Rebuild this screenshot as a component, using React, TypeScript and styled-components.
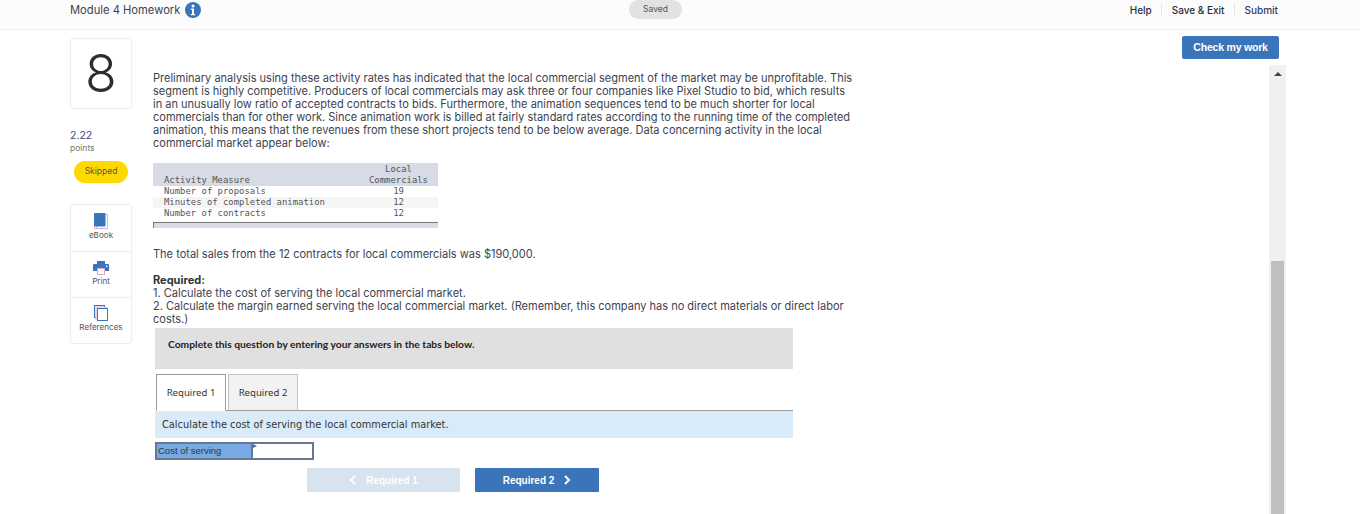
import * as React from 'react';
import styled, {createGlobalStyle} from 'styled-components';

const Global = createGlobalStyle`
	html, body {
		margin: 0;
		padding: 0;
		height: 514px;
		overflow: hidden;
		background: #fff;
		font-family: Inter, "Liberation Sans", sans-serif;
		color: #333;
	}
	* {
		box-sizing: border-box;
	}
`;

const Page = styled.div`
	width: 1360px;
	height: 514px;
	overflow: hidden;
	display: flex;
	flex-direction: column;
`;

const Header = styled.header`
	height: 30px;
	flex: none;
	display: grid;
	grid-template-columns: 559px 53px 1fr;
	align-items: center;
	padding: 0 82px 10px 70px;
	background: #fcfcfc;
	border-bottom: 1px solid #eee;
`;

const Title = styled.div`
	display: flex;
	align-items: center;
	gap: 5px;
	font-size: 11.2px;
	color: #3c4250;
`;

const SavedPill = styled.div`
	width: 53px;
	height: 19px;
	border-radius: 10px;
	background: #e2e2e2;
	color: #555;
	font-size: 8.5px;
	line-height: 19px;
	text-align: center;
`;

const Nav = styled.nav`
	display: flex;
	justify-content: flex-end;
	align-items: center;
	font-size: 10px;
	font-weight: 500;
`;

const NavLink = styled.span<{$divided?: boolean; $accent?: boolean}>`
	padding: 0 ${p => (p.$divided ? '9px' : '0')} 0 10px;
	border-right: ${p => (p.$divided ? '1px solid #e8e8e8' : 'none')};
	color: ${p => (p.$accent ? '#2f3a6b' : '#2b2f3a')};
	line-height: 14px;
`;

const Body = styled.div`
	flex: 1;
	display: flex;
	min-height: 0;
	padding-left: 70px;
`;

const Rail = styled.aside`
	width: 62px;
	flex: none;
	padding-top: 8px;
`;

const NumberCard = styled.div`
	height: 71px;
	border: 1px solid #eee;
	border-radius: 3px;
	display: flex;
	align-items: center;
	justify-content: center;
	font-size: 52px;
	font-weight: 300;
	color: #2d2d2d;
	line-height: 1;
`;

const Score = styled.div`
	margin-top: 20px;
	font-size: 10.5px;
	line-height: 13px;
	color: #2f4f7a;
`;

const ScoreLabel = styled.div`
	font-size: 8.5px;
	line-height: 13px;
	color: #777;
`;

const SkippedPill = styled.div`
	margin: 6px 0 0 4px;
	width: 54px;
	height: 22px;
	border-radius: 11px;
	background: #ffd800;
	color: #555;
	font-size: 8.5px;
	line-height: 20px;
	text-align: center;
`;

const Tools = styled.div`
	margin-top: 21px;
	border: 1px solid #eee;
	border-radius: 3px;
`;

const Tool = styled.div`
	height: 46px;
	display: flex;
	flex-direction: column;
	align-items: center;
	justify-content: flex-end;
	padding-bottom: 11px;
	gap: 1px;
	font-size: 8.1px;
	line-height: 10px;
	color: #555;
	& + & {
		border-top: 1px solid #eee;
	}
`;

const Main = styled.main`
	width: 701px;
	flex: none;
	margin-left: 21px;
	padding-top: 42px;
	font-size: 11.02px;
	line-height: 13px;
	color: #3d4350;
`;

const Para = styled.p`
	margin: 0;
`;

const DataTable = styled.table`
	margin-top: 13px;
	width: 285px;
	border-collapse: collapse;
	font-family: "DejaVu Sans Mono", "Liberation Mono", monospace;
	font-size: 8.92px;
	line-height: 11px;
	color: #555;
`;

const HeadRow = styled.tr`
	background: #d7dbe6;
`;

const Row = styled.tr<{$shaded?: boolean}>`
	background: ${p => (p.$shaded ? '#f5f5f5' : '#fff')};
`;

const Cell = styled.td`
	padding: 0 0 0 11px;
	vertical-align: bottom;
`;

const NumCell = styled.td<{$head?: boolean}>`
	width: 70px;
	padding: ${p => (p.$head ? '1px' : '0')} 9px 0 0;
	text-align: center;
	vertical-align: bottom;
`;

const FootBand = styled.div`
	margin-top: 3px;
	width: 285px;
	height: 6px;
	background: #d7dbe6;
	border-top: 1px solid #777;
	border-left: 1px solid #777;
`;

const SalesLine = styled(Para)`
	margin-top: 20px;
`;

const Required = styled(Para)`
	margin-top: 13px;
	font-weight: 700;
	color: #333;
`;

const Prompt = styled.div`
	margin: 2px 0 0 2px;
	width: 638px;
	height: 41px;
	padding-top: 9px;
	background: #e0e0e0;
	font-family: Lato, "Noto Sans", sans-serif;
	font-size: 10.3px;
	font-weight: 700;
	line-height: 14px;
	text-indent: 13px;
	color: #222;
`;

const TabBar = styled.div`
	margin: 5px 0 0 3px;
	width: 637px;
	height: 37px;
	display: flex;
	align-items: flex-end;
	gap: 2px;
	border-bottom: 1px solid #999;
`;

const Tab = styled.div<{$active?: boolean}>`
	width: 70px;
	height: ${p => (p.$active ? '37px' : '36px')};
	margin-bottom: ${p => (p.$active ? '-1px' : '0')};
	border: 1px solid ${p => (p.$active ? '#999' : '#c4c4c4')};
	border-bottom: ${p => (p.$active ? '1px solid #fff' : 'none')};
	background: ${p => (p.$active ? '#fff' : '#f2f2f2')};
	font-family: "Noto Sans", sans-serif;
	font-size: 9.6px;
	line-height: 36px;
	text-align: center;
	color: #333;
`;

const Instruction = styled.div`
	margin-left: 2px;
	width: 638px;
	height: 27px;
	padding-left: 7px;
	background: #d9ebf9;
	font-family: "DejaVu Sans", sans-serif;
	font-size: 9.8px;
	line-height: 27px;
	color: #333;
`;

const CostRow = styled.div`
	margin: 4px 0 0 2px;
	width: 159px;
	height: 18px;
	display: flex;
	border: 2px solid #67778f;
`;

const CostLabel = styled.div`
	width: 96px;
	background: #77aae3;
	border-right: 2px solid #67778f;
	font-family: "Liberation Sans", sans-serif;
	font-size: 9.5px;
	line-height: 14px;
	padding-left: 1px;
	color: #333;
`;

const CostInput = styled.div`
	position: relative;
	flex: 1;
	background: #fff;
	&::before {
		content: "";
		position: absolute;
		left: 0;
		top: 0;
		border-left: 4px solid #3b75b9;
		border-top: 2px solid transparent;
		border-bottom: 2px solid transparent;
	}
`;

const Pager = styled.div`
	margin: 8px 0 0 154px;
	display: flex;
	gap: 15px;
`;

const PageButton = styled.div<{$disabled?: boolean; $width: number}>`
	width: ${p => p.$width}px;
	height: 24px;
	display: flex;
	align-items: center;
	justify-content: center;
	gap: 10px;
	border-radius: 1px;
	background: ${p => (p.$disabled ? '#d8e3f0' : '#3b75b9')};
	color: #fff;
	font-family: "Liberation Sans", sans-serif;
	font-size: 10px;
	font-weight: 700;
`;

const Side = styled.div`
	flex: 1;
	display: flex;
	flex-direction: column;
	align-items: flex-end;
	padding: 6px 81px 0 0;
`;

const CheckButton = styled.div`
	width: 97px;
	height: 23px;
	flex: none;
	border-radius: 2px;
	background: #3b75b9;
	color: #fff;
	font-family: "Liberation Sans", sans-serif;
	font-size: 10.5px;
	letter-spacing: -0.2px;
	font-weight: 700;
	line-height: 23px;
	text-align: center;
`;

const ScrollTrack = styled.div`
	margin: 6px -7px 0 0;
	width: 17px;
	flex: 1;
	background: #f0f0f0;
	display: flex;
	flex-direction: column;
	align-items: center;
	padding-top: 7px;
`;

const ScrollArrow = styled.div`
	width: 0;
	height: 0;
	border-left: 4px solid transparent;
	border-right: 4px solid transparent;
	border-bottom: 4px solid #444;
`;

const ScrollThumb = styled.div`
	margin-top: auto;
	width: 13px;
	height: 253px;
	background: #bfbfbf;
`;

const InfoIcon = () => (
	<svg width="16" height="16" viewBox="0 0 16 16">
		<circle cx="8" cy="8" r="8" fill="#3b75b9" />
		<circle cx="8" cy="4" r="1.5" fill="#fff" />
		<path d="M5.8 6.5h3.2v5.5h1.2v1.3H5.8V12H7V7.8H5.8z" fill="#fff" />
	</svg>
);

const BookIcon = () => (
	<svg width="14" height="16" viewBox="0 0 14 16">
		<rect x="2.5" y="1.5" width="11" height="14" fill="#fff" stroke="#b9c6ee" />
		<rect x="0" y="0" width="11.5" height="13.5" rx="1" fill="#3b75b9" />
		<path d="M0.5 13v2.5h11" fill="none" stroke="#d7a9cf" />
	</svg>
);

const PrintIcon = () => (
	<svg width="16" height="14" viewBox="0 0 16 14">
		<rect x="4" y="0" width="8" height="3" fill="#3b75b9" />
		<path d="M1 3h14a1 1 0 0 1 1 1v6H0V4a1 1 0 0 1 1-1z" fill="#3b75b9" />
		<rect x="4.5" y="7.5" width="7" height="6" fill="#fff" stroke="#d7a9cf" />
		<rect x="13" y="4.5" width="1.5" height="1.5" fill="#fff" />
	</svg>
);

const RefIcon = () => (
	<svg width="14" height="16" viewBox="0 0 14 16" fill="#fff">
		<rect x="0.5" y="0.5" width="10" height="12" stroke="#3b75b9" />
		<rect x="2" y="2" width="10" height="12" stroke="#d7a9cf" />
		<rect x="3.5" y="3.5" width="10" height="12" stroke="#3b75b9" />
	</svg>
);

const Chevron = ({left}: {left?: boolean}) => (
	<svg width="7" height="10" viewBox="0 0 7 10" fill="none" stroke="#fff" strokeWidth="2">
		<path d={left ? 'M6 1L2 5l4 4' : 'M1 1l4 4-4 4'} />
	</svg>
);

const rows = [
	{name: 'Number of proposals', value: 19},
	{name: 'Minutes of completed animation', value: 12, shaded: true},
	{name: 'Number of contracts', value: 12},
];

export default function App() {
	return (
		<Page>
			<Global />
			<Header>
				<Title>
					Module 4 Homework <InfoIcon />
				</Title>
				<SavedPill>Saved</SavedPill>
				<Nav>
					<NavLink $divided>Help</NavLink>
					<NavLink $divided>Save &amp; Exit</NavLink>
					<NavLink $accent>Submit</NavLink>
				</Nav>
			</Header>
			<Body>
				<Rail>
					<NumberCard>8</NumberCard>
					<Score>2.22</Score>
					<ScoreLabel>points</ScoreLabel>
					<SkippedPill>Skipped</SkippedPill>
					<Tools>
						<Tool><BookIcon />eBook</Tool>
						<Tool><PrintIcon />Print</Tool>
						<Tool><RefIcon />References</Tool>
					</Tools>
				</Rail>
				<Main>
					<Para>
						Preliminary analysis using these activity rates has indicated that the local commercial segment of the market may be unprofitable. This segment is highly competitive. Producers of local commercials may ask three or four companies like Pixel Studio to bid, which results in an unusually low ratio of accepted contracts to bids. Furthermore, the animation sequences tend to be much shorter for local commercials than for other work. Since animation work is billed at fairly standard rates according to the running time of the completed animation, this means that the revenues from these short projects tend to be below average. Data concerning activity in the local commercial market appear below:
					</Para>
					<DataTable>
						<tbody>
							<HeadRow>
								<Cell>Activity Measure</Cell>
								<NumCell $head>Local<br />Commercials</NumCell>
							</HeadRow>
							{rows.map(r => (
								<Row key={r.name} $shaded={r.shaded}>
									<Cell>{r.name}</Cell>
									<NumCell>{r.value}</NumCell>
								</Row>
							))}
						</tbody>
					</DataTable>
					<FootBand />
					<SalesLine>The total sales from the 12 contracts for local commercials was $190,000.</SalesLine>
					<Required>Required:</Required>
					<Para>1. Calculate the cost of serving the local commercial market.</Para>
					<Para>2. Calculate the margin earned serving the local commercial market. (Remember, this company has no direct materials or direct labor costs.)</Para>
					<Prompt>Complete this question by entering your answers in the tabs below.</Prompt>
					<TabBar>
						<Tab $active>Required 1</Tab>
						<Tab>Required 2</Tab>
					</TabBar>
					<Instruction>Calculate the cost of serving the local commercial market.</Instruction>
					<CostRow>
						<CostLabel>Cost of serving</CostLabel>
						<CostInput />
					</CostRow>
					<Pager>
						<PageButton $disabled $width={153}><Chevron left />Required 1</PageButton>
						<PageButton $width={124}>Required 2<Chevron /></PageButton>
					</Pager>
				</Main>
				<Side>
					<CheckButton>Check my work</CheckButton>
					<ScrollTrack>
						<ScrollArrow />
						<ScrollThumb />
					</ScrollTrack>
				</Side>
			</Body>
		</Page>
	);
}
